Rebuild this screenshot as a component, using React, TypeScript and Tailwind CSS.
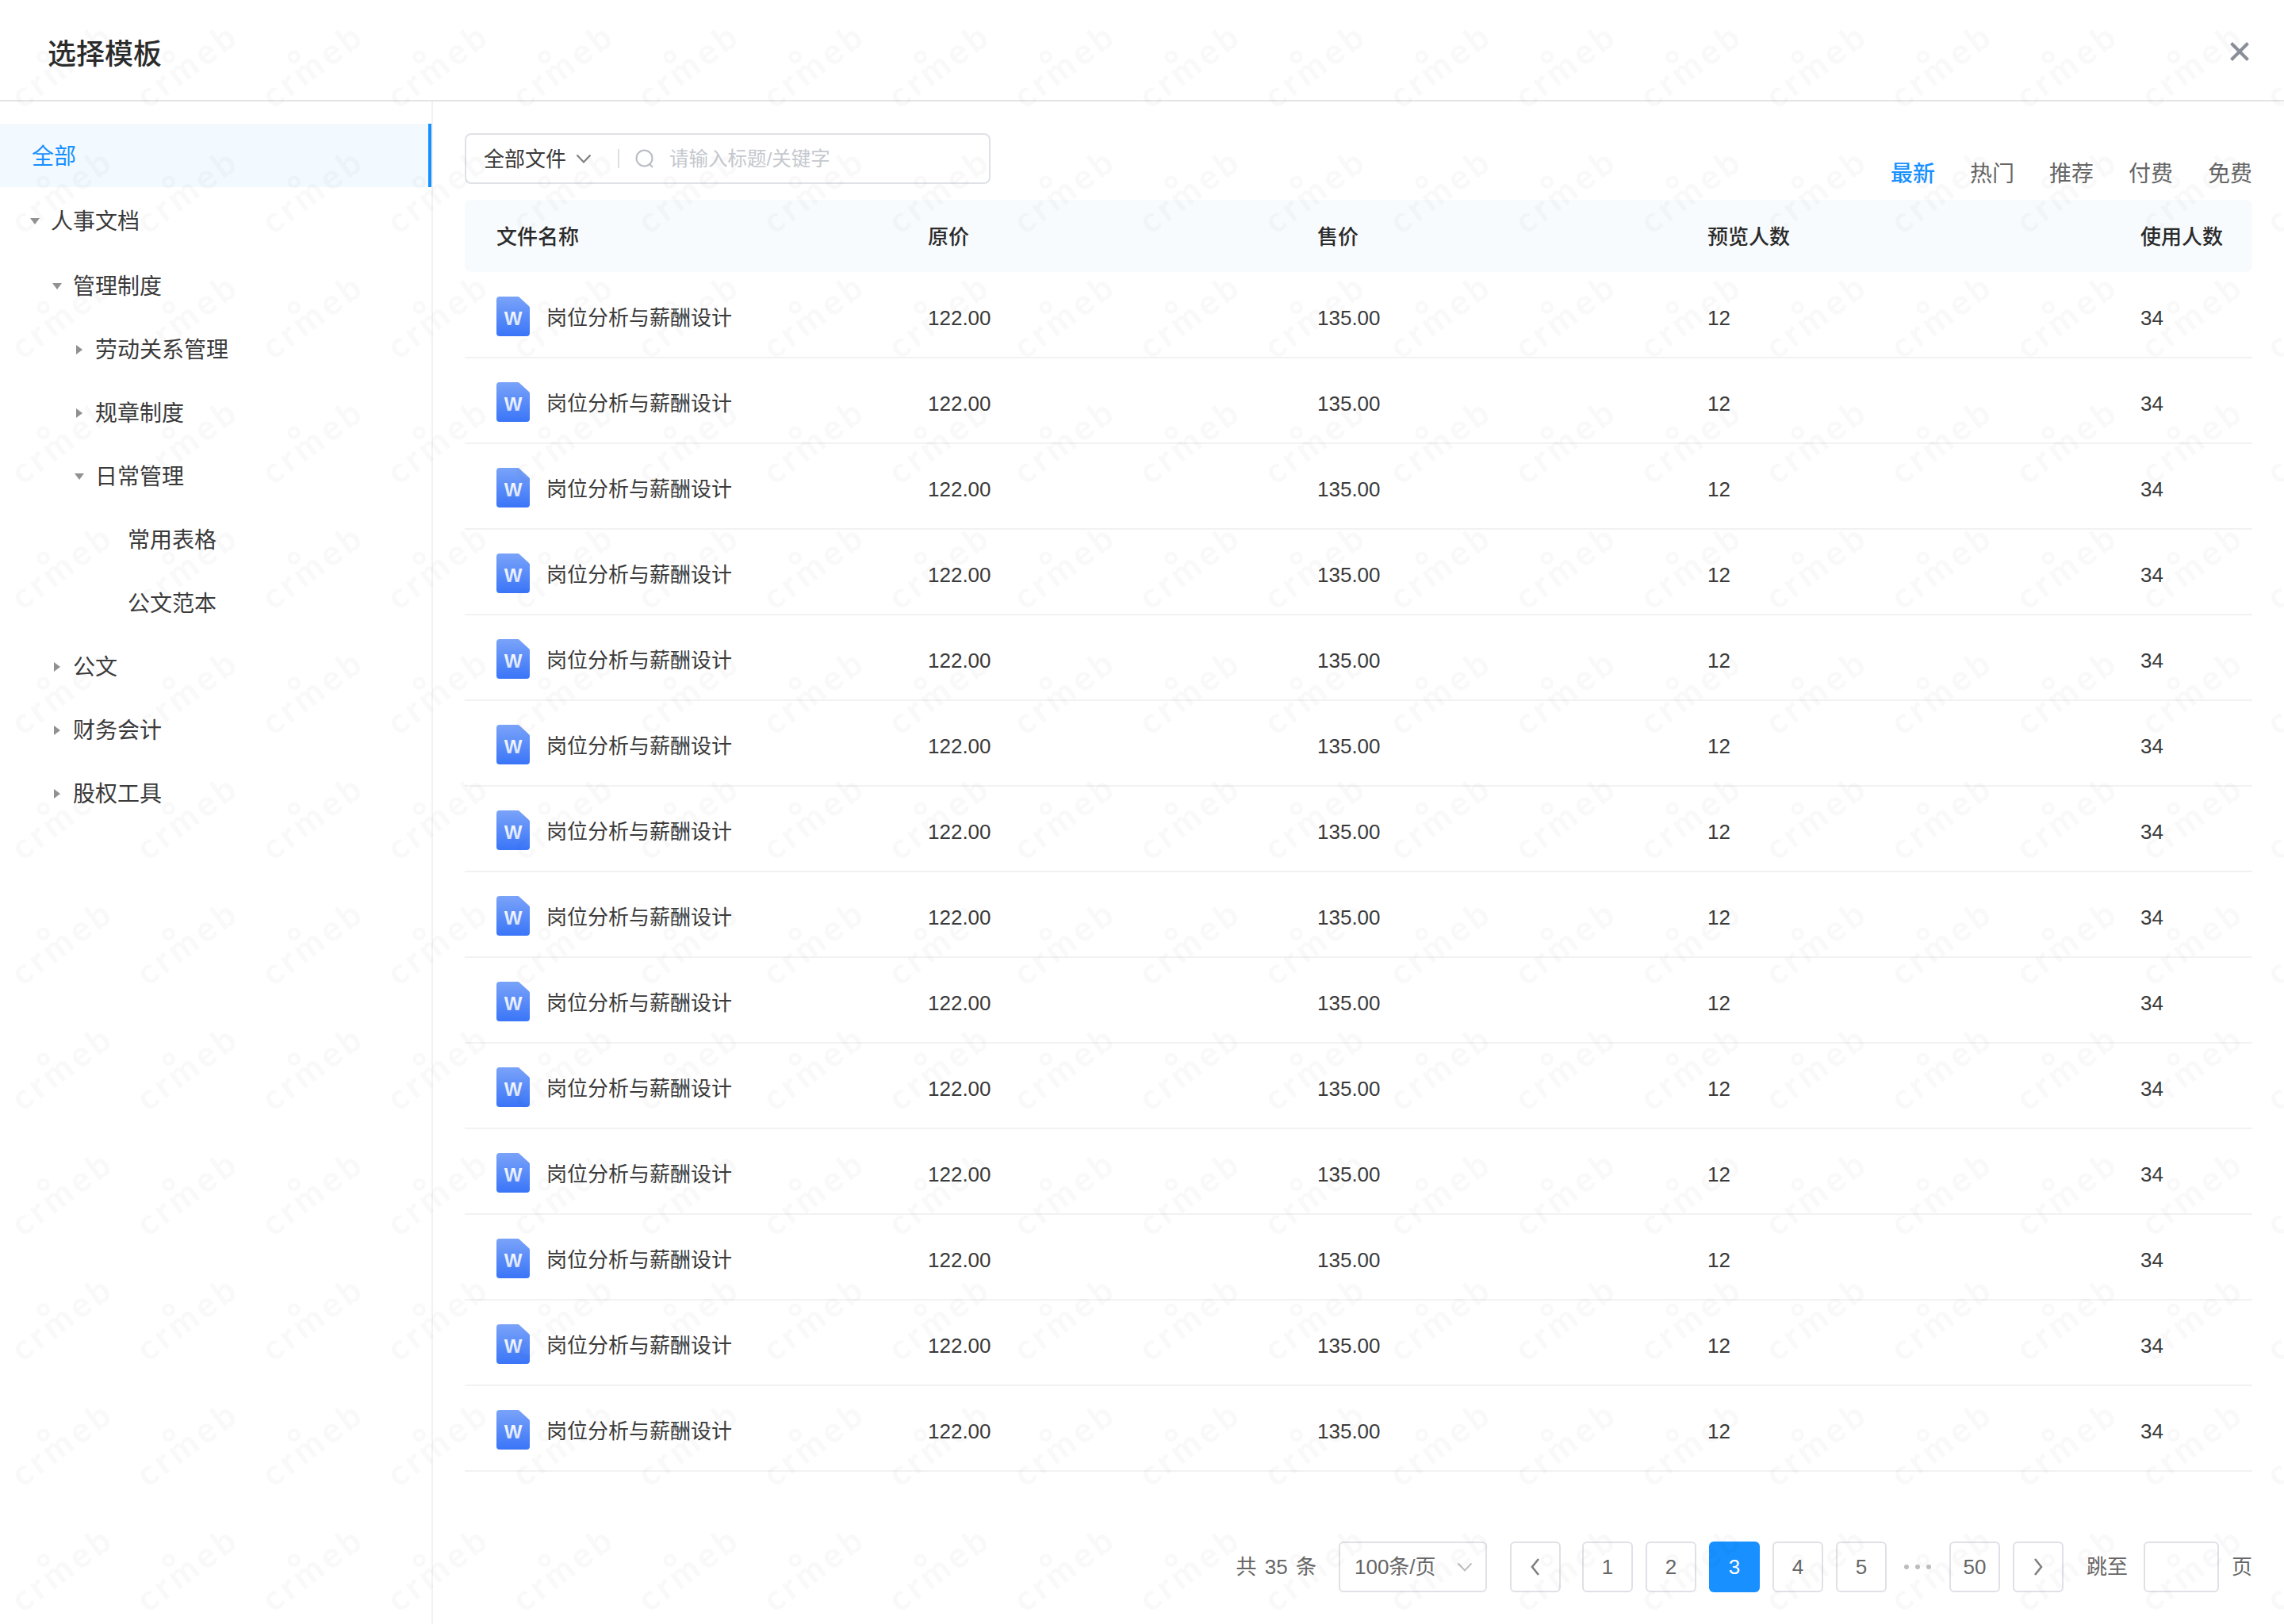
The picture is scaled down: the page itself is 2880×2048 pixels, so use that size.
import React from "react";

const tree = [
  { label: "人事文档", level: 0, open: true },
  { label: "管理制度", level: 1, open: true },
  { label: "劳动关系管理", level: 2, open: false },
  { label: "规章制度", level: 2, open: false },
  { label: "日常管理", level: 2, open: true },
  { label: "常用表格", level: 3, leaf: true },
  { label: "公文范本", level: 3, leaf: true },
  { label: "公文", level: 1, open: false },
  { label: "财务会计", level: 1, open: false },
  { label: "股权工具", level: 1, open: false },
];

const indent = ["pl-[38px]", "pl-[66px]", "pl-[94px]", "pl-[161px]"];

function Caret({ open }: { open?: boolean }) {
  return (
    <svg width="12" height="12" viewBox="0 0 12 12" className="shrink-0 mr-[14px] mb-[2px]">
      {open ? <path d="M0 2h12L6 10z" fill="#919191" /> : <path d="M2 0l8 6-8 6z" fill="#919191" />}
    </svg>
  );
}

function Chevron({ color, size }: { color: string; size: number }) {
  return (
    <svg width={size} height={size} viewBox="0 0 20 20" fill="none" stroke={color} strokeWidth="2.2">
      <path d="M1.5 5.5L10 14.5L18.5 5.5" />
    </svg>
  );
}

function WordIcon() {
  return (
    <svg width="42" height="50" viewBox="0 0 42 50" className="shrink-0 mb-1">
      <defs>
        <linearGradient id="doc" x1="0" y1="0" x2="0" y2="1">
          <stop offset="0" stopColor="#7aa3f9" />
          <stop offset="1" stopColor="#3a75f8" />
        </linearGradient>
        <linearGradient id="docw" x1="0" y1="0" x2="0" y2="1">
          <stop offset="0" stopColor="#ffffff" />
          <stop offset="1" stopColor="#cfdcfb" />
        </linearGradient>
      </defs>
      <path d="M4 0H27a3 3 0 0 1 2 1L41 12a3 3 0 0 1 1 2V46a4 4 0 0 1-4 4H4a4 4 0 0 1-4-4V4a4 4 0 0 1 4-4z" fill="url(#doc)" />
      <text x="21" y="36" textAnchor="middle" fontSize="24" fontWeight="700" fill="url(#docw)" fontFamily="Liberation Sans, sans-serif">
        W
      </text>
    </svg>
  );
}

function PageBox({ children, active }: { children: React.ReactNode; active?: boolean }) {
  return (
    <div
      className={
        active
          ? "w-16 h-16 flex items-center justify-center rounded-[6px] bg-[#1890ff] text-white text-[26px]"
          : "w-16 h-16 flex items-center justify-center rounded-[6px] border-2 border-[#dfe1e6] text-[#666] text-[26px]"
      }
    >
      {children}
    </div>
  );
}

function Watermark() {
  return (
    <svg className="absolute inset-0 pointer-events-none" width="2880" height="2048">
      <defs>
        <pattern id="wm" width="158" height="158" patternUnits="userSpaceOnUse">
          <g transform="rotate(-36.5 80 84)" fill="#000" fillOpacity="0.024">
            <text x="80" y="97" textAnchor="middle" fontSize="44" fontWeight="700" letterSpacing="5" fontFamily="Lato, sans-serif">
              crmeb
            </text>
            <circle cx="67" cy="59" r="6" fill="none" stroke="#000" strokeOpacity="0.024" strokeWidth="4" />
          </g>
        </pattern>
      </defs>
      <rect width="2880" height="2048" fill="url(#wm)" />
    </svg>
  );
}

export default function App() {
  const rows = Array.from({ length: 14 });
  const tabs = ["最新", "热门", "推荐", "付费", "免费"];

  return (
    <div className="relative w-[2880px] h-[2048px] overflow-hidden bg-white text-[#3a3a3a] font-['Liberation_Sans','Noto_Sans_CJK_SC',sans-serif]">
      <header className="h-[128px] border-b-2 border-[#e4e4e4] flex items-center justify-between pl-[60px] pr-[44px] pt-[12px]">
        <h1 className="text-[36px] font-medium text-[#2b2b2b]">选择模板</h1>
        <svg width="24" height="24" viewBox="0 0 24 24" className="mb-[9px]" stroke="#8a8e99" strokeWidth="4" fill="none">
          <path d="M1.5 1.5L22.5 22.5M22.5 1.5L1.5 22.5" />
        </svg>
      </header>

      <div className="flex h-[1920px]">
        <aside className="w-[546px] shrink-0 border-r-2 border-[#f2f2f2] pt-[28px] text-[28px]">
          <div className="h-20 pt-1 flex items-center pl-[40px] bg-[#f2f9ff] border-r-4 border-[#1890ff] text-[#1890ff]">全部</div>
          {tree.map((n, i) => (
            <div key={n.label} className={`h-20 pt-1 flex items-center ${indent[n.level]} ${i < 2 ? "mt-[2px]" : ""}`}>
              {!n.leaf && <Caret open={n.open} />}
              <span>{n.label}</span>
            </div>
          ))}
        </aside>

        <main className="flex-1 flex flex-col pl-[40px] pr-[40px] pt-[40px]">
          <div className="flex items-end justify-between">
            <div className="w-[663px] h-16 rounded-[8px] border-2 border-[#dfe1e6] flex items-center pl-[22px] text-[26px]">
              <span className="mr-[12px] pt-[3px]">全部文件</span>
              <Chevron color="#808080" size={20} />
              <span className="ml-[33px] mr-[20px] w-[2px] h-[24px] bg-[#dcdee2]" />
              <svg width="24" height="24" viewBox="0 0 24 24" fill="none" stroke="#b9bcc4" strokeWidth="2">
                <circle cx="11.5" cy="11.5" r="10" />
                <path d="M18 19l4 4" />
              </svg>
              <span className="ml-[19px] pt-[3px] text-[24.5px] text-[#c5c8ce]">请输入标题/关键字</span>
            </div>
            <nav className="flex gap-[44px] text-[28px] leading-[28px] text-[#666] translate-y-[2px]">
              {tabs.map((t, i) => (
                <span key={t} className={i === 0 ? "text-[#1890ff] font-medium" : ""}>
                  {t}
                </span>
              ))}
            </nav>
          </div>

          <div className="mt-5 h-[91px] pt-[3px] rounded-[8px] bg-[#f8fbfe] grid grid-cols-[544px_491px_492px_546px_1fr] items-center pl-[40px] text-[26px] font-medium text-[#2b2b2b]">
            <span>文件名称</span>
            <span>原价</span>
            <span>售价</span>
            <span>预览人数</span>
            <span>使用人数</span>
          </div>

          <div className="mt-[1px]">
            {rows.map((_, i) => (
              <div key={i} className="h-[108px] pt-2 border-b-2 border-[#f2f2f2] grid grid-cols-[544px_491px_492px_546px_1fr] items-center pl-[40px] text-[26px]">
                <div className="flex items-center gap-[21px]">
                  <WordIcon />
                  <span>岗位分析与薪酬设计</span>
                </div>
                <span>122.00</span>
                <span>135.00</span>
                <span>12</span>
                <span>34</span>
              </div>
            ))}
          </div>

          <footer className="mt-[88px] flex items-center justify-end text-[26px] text-[#666]">
            <span className="[word-spacing:3px]">共 35 条</span>
            <div className="ml-[28px] w-[187px] h-16 rounded-[6px] border-2 border-[#dfe1e6] flex items-center justify-between pl-[18px] pr-[16px]">
              <span>100条/页</span>
              <Chevron color="#c0c0c0" size={20} />
            </div>
            <div className="ml-[29px] mr-[27px]">
              <PageBox>
                <svg width="16" height="24" viewBox="0 0 16 24" fill="none" stroke="#808080" strokeWidth="2.6">
                  <path d="M12 2L4 12L12 22" />
                </svg>
              </PageBox>
            </div>
            <div className="flex items-center gap-4">
              <PageBox>1</PageBox>
              <PageBox>2</PageBox>
              <PageBox active>3</PageBox>
              <PageBox>4</PageBox>
              <PageBox>5</PageBox>
              <div className="w-[47px] flex justify-center gap-[8px]">
                <i className="w-[6px] h-[6px] rounded-full bg-[#bdbdbd]" />
                <i className="w-[6px] h-[6px] rounded-full bg-[#bdbdbd]" />
                <i className="w-[6px] h-[6px] rounded-full bg-[#bdbdbd]" />
              </div>
              <PageBox>50</PageBox>
              <PageBox>
                <svg width="16" height="24" viewBox="0 0 16 24" fill="none" stroke="#808080" strokeWidth="2.6">
                  <path d="M4 2L12 12L4 22" />
                </svg>
              </PageBox>
            </div>
            <span className="ml-[29px]">跳至</span>
            <div className="ml-[20px] w-[95px] h-16 rounded-[6px] border-2 border-[#dfe1e6]" />
            <span className="ml-[16px]">页</span>
          </footer>
        </main>
      </div>

      <Watermark />
    </div>
  );
}
